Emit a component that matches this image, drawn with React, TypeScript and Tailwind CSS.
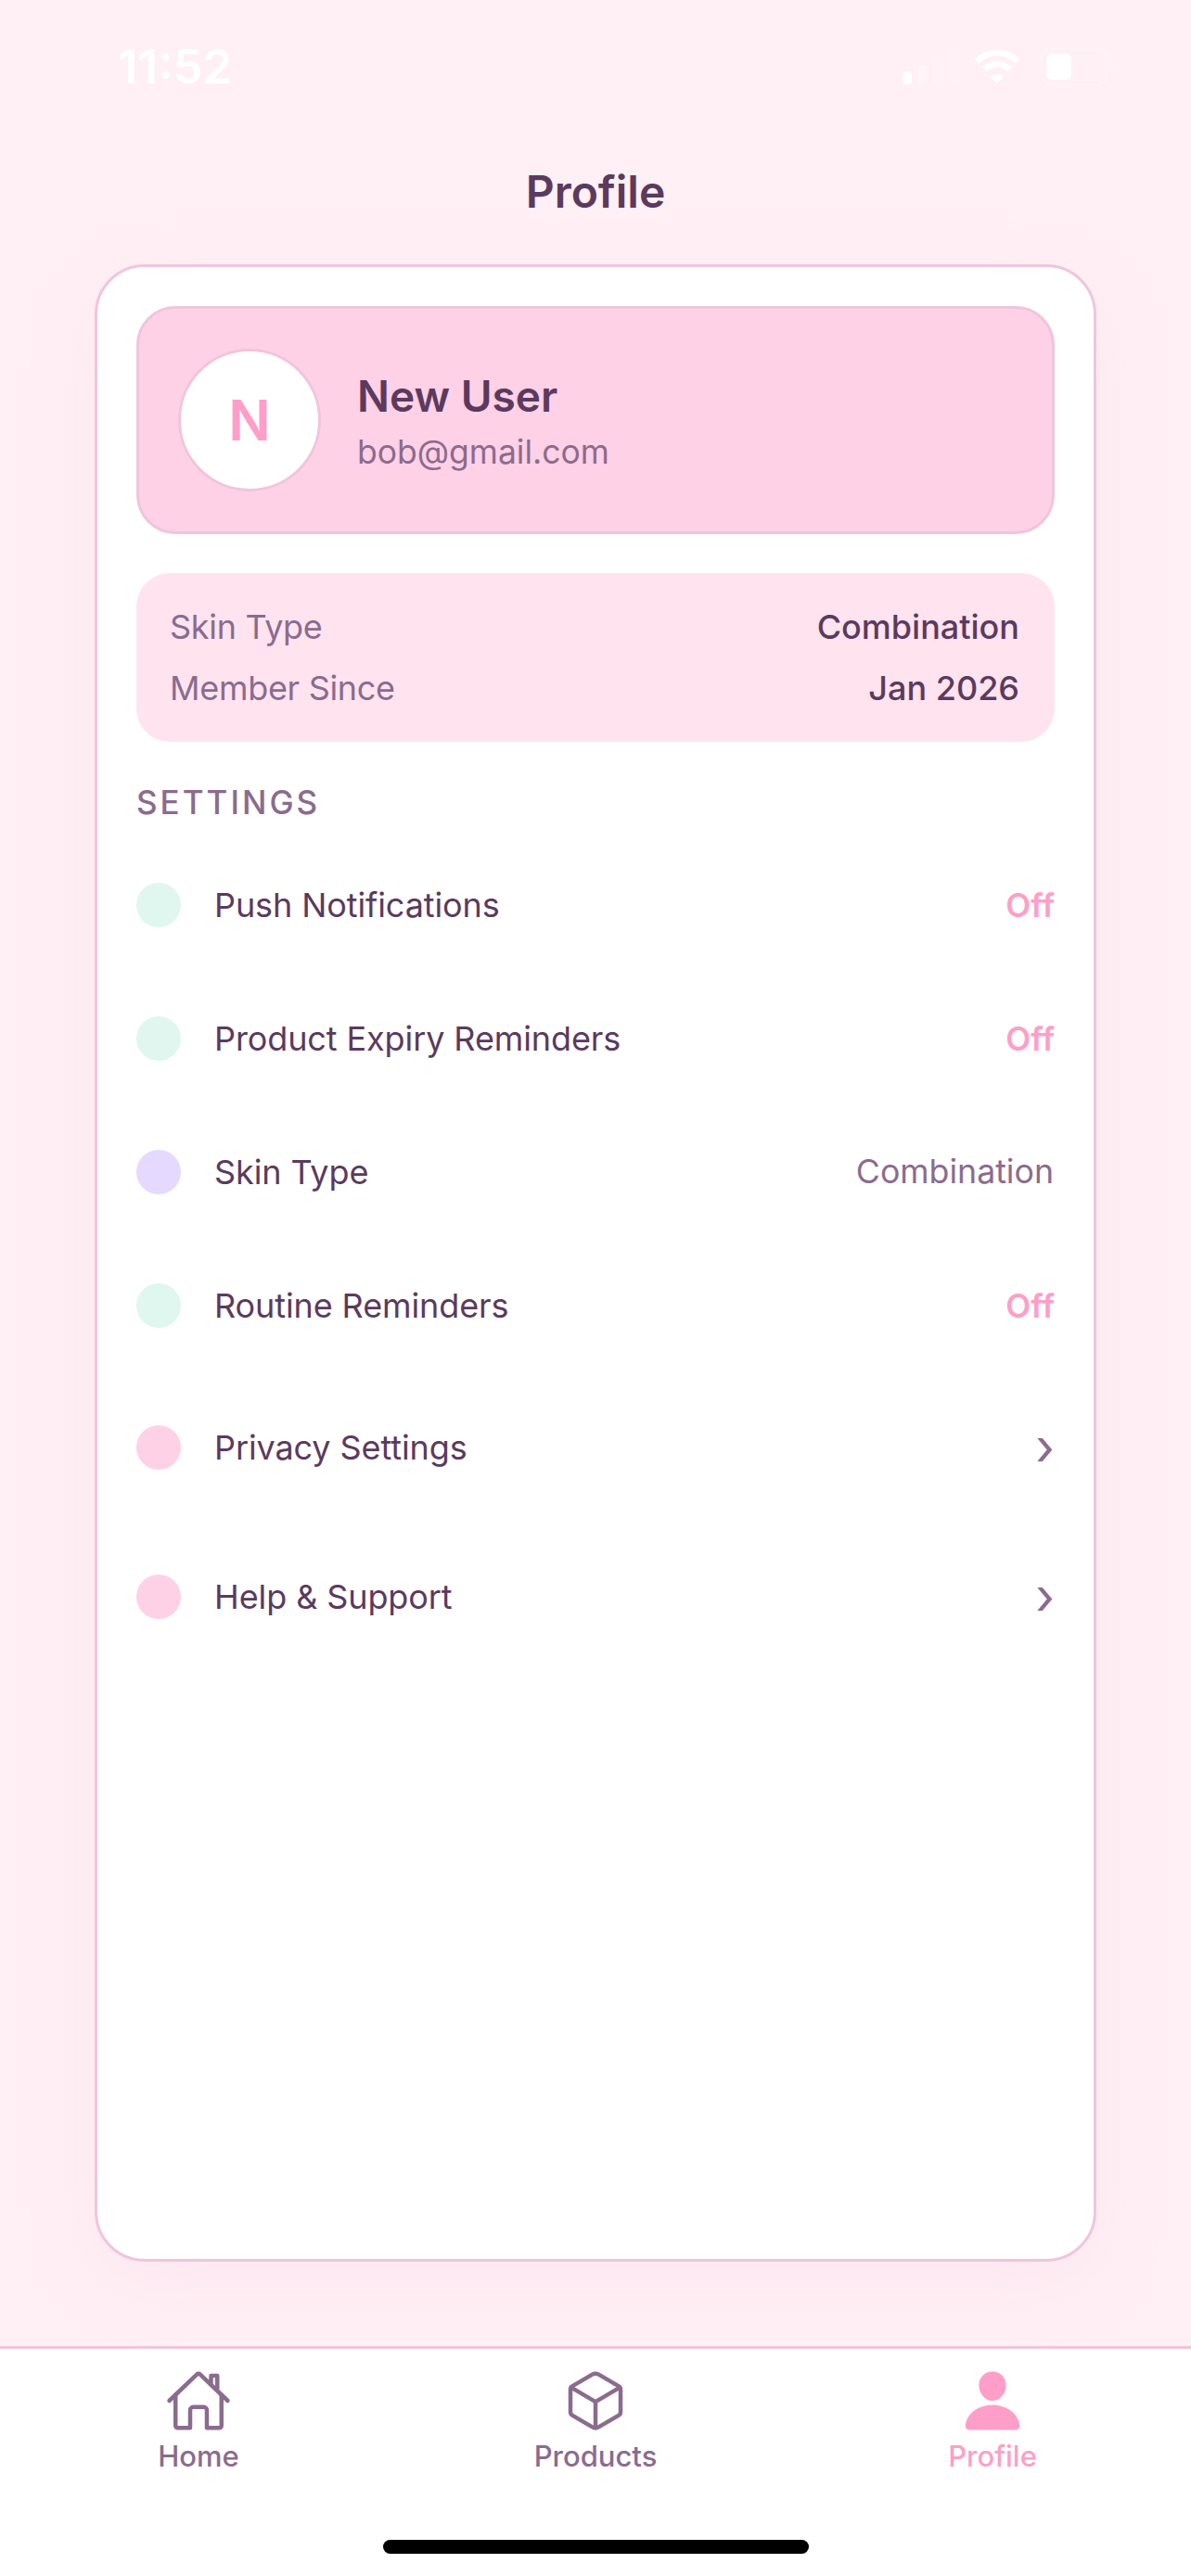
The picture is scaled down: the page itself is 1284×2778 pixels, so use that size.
import { IoCubeOutline, IoHomeOutline, IoPerson } from 'react-icons/io5'

const settings = [
  { label: 'Push Notifications', value: 'Off', dot: 'bg-[#DFF7EF]', kind: 'off' },
  { label: 'Product Expiry Reminders', value: 'Off', dot: 'bg-[#DFF7EF]', kind: 'off' },
  { label: 'Skin Type', value: 'Combination', dot: 'bg-[#E6D9FF]', kind: 'text' },
  { label: 'Routine Reminders', value: 'Off', dot: 'bg-[#DFF7EF]', kind: 'off' },
  { label: 'Privacy Settings', value: '›', dot: 'bg-[#FFD1E6]', kind: 'nav' },
  { label: 'Help & Support', value: '›', dot: 'bg-[#FFD1E6]', kind: 'nav' },
]

function StatusBar() {
  return (
    <div className="h-[144px] flex items-center justify-between pl-[127px] pr-[84px] pb-[1px] text-white">
      <span className="text-[51px] leading-none font-semibold font-['Inter',sans-serif]">11:52</span>
      <div className="flex items-end">
        <svg width="61" height="40" viewBox="0 0 61 40" fill="#fff">
          <rect x="0" y="25" width="10" height="14" rx="4" />
          <rect x="17" y="18" width="10" height="21" rx="3" opacity="0.25" />
          <rect x="34" y="10" width="10" height="29" rx="3" opacity="0.2" />
          <rect x="51" y="1" width="10" height="38" rx="3" opacity="0.12" />
        </svg>
        <svg className="ml-[16px]" width="50" height="40" viewBox="0 0 52 40" fill="none" stroke="#fff" strokeWidth="7">
          <path d="M3 14 C16 1 36 1 49 14" />
          <path d="M12 23 C20 15 32 15 40 23" />
          <path d="M26 39 L18 31 C22 27 30 27 34 31 Z" fill="#fff" stroke="none" />
        </svg>
        <div className="ml-[22px] flex items-center gap-[2px]">
          <div className="w-[73px] h-[40px] p-[4px] rounded-[12px] border-[2px] border-white/25">
            <div className="w-[27px] h-full rounded-[6px] bg-white" />
          </div>
          <div className="w-[3px] h-[12px] rounded-r-full bg-white/25" />
        </div>
      </div>
    </div>
  )
}

function SettingRow({ label, value, dot, kind, tall }: { label: string; value: string; dot: string; kind: string; tall: boolean }) {
  return (
    <div className={`flex items-center ${tall ? 'h-[161px]' : 'h-[144px]'}`}>
      <div className={`w-[48px] h-[48px] rounded-full ${dot}`} />
      <span className="ml-[36px] text-[36px] tracking-[-0.1px] text-[#5B3A5E]">{label}</span>
      {kind === 'off' && <span className="ml-auto text-[35px] font-semibold text-[#FF9EC8]">{value}</span>}
      {kind === 'text' && <span className="ml-auto pr-[1px] text-[35.7px] text-[#8B6B8E]">{value}</span>}
      {kind === 'nav' && <span className="ml-auto text-[54px] leading-none text-[#8B6B8E]">{value}</span>}
    </div>
  )
}

function TabBar() {
  const tabs = [
    { label: 'Home', Icon: IoHomeOutline, active: false },
    { label: 'Products', Icon: IoCubeOutline, active: false },
    { label: 'Profile', Icon: IoPerson, active: true },
  ]
  return (
    <div className="h-[248px] bg-white border-t-[3px] border-[#F0C5DC] flex flex-col">
      <div className="flex pt-[20px]">
        {tabs.map(({ label, Icon, active }) => (
          <div key={label} className={`flex-1 flex flex-col items-center ${active ? 'text-[#FF9EC8]' : 'text-[#8B6B8E]'}`}>
            <Icon size={72} />
            <span className="mt-[6px] text-[31px] leading-[36px] font-medium">{label}</span>
          </div>
        ))}
      </div>
      <div className="mt-auto mb-[24px] mx-auto w-[459px] h-[15px] rounded-full bg-black" />
    </div>
  )
}

export default function App() {
  return (
    <div className="h-[2778px] flex flex-col bg-[#FFF0F5] font-['Inter',sans-serif]">
      <StatusBar />
      <h1 className="h-[141px] pt-[36px] text-center text-[48px] leading-[54px] font-semibold text-[#5B3A5E]">Profile</h1>
      <div className="h-[2154px] mx-[102px] px-[42px] pt-[42px] bg-white rounded-[54px] border-[3px] border-[#F0C5DC] shadow-[0_24px_72px_rgba(240,197,220,0.2)]">
        <div className="h-[246px] flex items-center pl-[42px] bg-[#FFD1E6] rounded-[42px] border-[3px] border-[#F0C5DC]">
          <div className="w-[154px] h-[154px] flex items-center justify-center rounded-full bg-white border-[3px] border-[#F0C5DC] text-[60px] font-semibold text-[#FF9EC8]">N</div>
          <div className="ml-[39px]">
            <div className="text-[46px] leading-[60px] font-semibold text-[#5B3A5E]">New User</div>
            <div className="mt-[9px] text-[35.5px] leading-[44px] text-[#8B6B8E]">bob@gmail.com</div>
          </div>
        </div>
        <div className="mt-[42px] h-[182px] pl-[36px] pr-[38px] flex flex-col justify-center gap-[22px] bg-[#FFE4F0] rounded-[36px] text-[36px] leading-[44px]">
          <div className="flex justify-between">
            <span className="tracking-[-0.3px] text-[#8B6B8E]">Skin Type</span>
            <span className="font-medium text-[#5B3A5E]">Combination</span>
          </div>
          <div className="flex justify-between">
            <span className="tracking-[-0.3px] text-[#8B6B8E]">Member Since</span>
            <span className="font-medium text-[#5B3A5E]">Jan 2026</span>
          </div>
        </div>
        <div className="mt-[43px] text-[35px] leading-[44px] font-medium tracking-[3px] text-[#8B6B8E]">SETTINGS</div>
        <div className="mt-[17px]">
          {settings.map((s) => (
            <SettingRow key={s.label} {...s} tall={s.kind === 'nav'} />
          ))}
        </div>
      </div>
      <div className="flex-1" />
      <TabBar />
    </div>
  )
}
